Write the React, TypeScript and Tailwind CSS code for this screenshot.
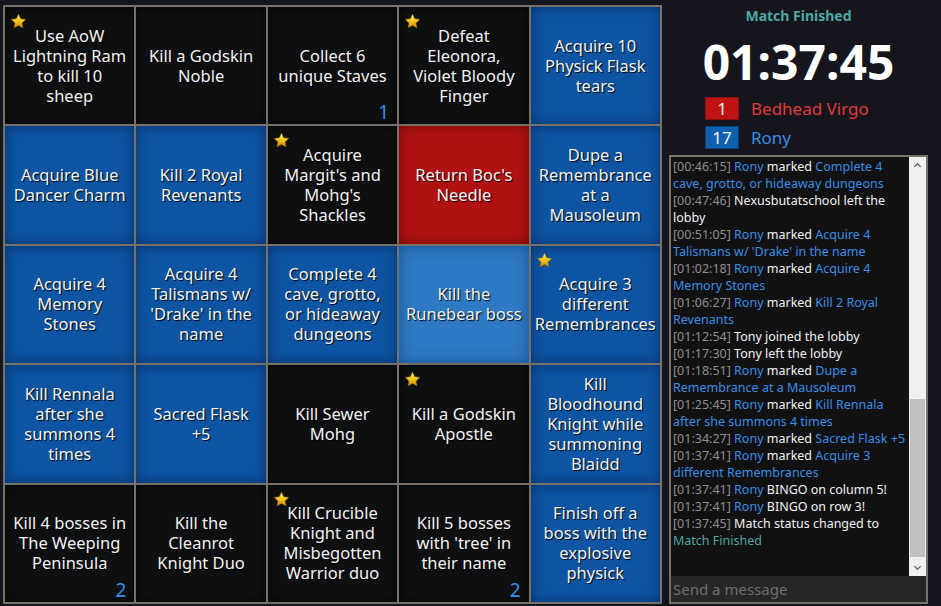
import clsx from "clsx";

type Cell = { text: string; color: "black" | "blue" | "light" | "red"; star?: boolean; count?: number };

const cells: Cell[] = [
  { text: "Use AoW Lightning Ram to kill 10\nsheep", color: "black", star: true },
  { text: "Kill a Godskin Noble", color: "black" },
  { text: "Collect 6 unique Staves", color: "black", count: 1 },
  { text: "Defeat Eleonora, Violet Bloody Finger", color: "black", star: true },
  { text: "Acquire 10 Physick Flask tears", color: "blue" },
  { text: "Acquire Blue Dancer Charm", color: "blue" },
  { text: "Kill 2 Royal Revenants", color: "blue" },
  { text: "Acquire Margit's and Mohg's Shackles", color: "black", star: true },
  { text: "Return Boc's Needle", color: "red" },
  { text: "Dupe a Remembrance at a Mausoleum", color: "blue" },
  { text: "Acquire 4 Memory Stones", color: "blue" },
  { text: "Acquire 4 Talismans w/ 'Drake' in the name", color: "blue" },
  { text: "Complete 4 cave, grotto, or hideaway dungeons", color: "blue" },
  { text: "Kill the Runebear boss", color: "light" },
  { text: "Acquire 3 different Remembrances", color: "blue", star: true },
  { text: "Kill Rennala after she summons 4 times", color: "blue" },
  { text: "Sacred Flask +5", color: "blue" },
  { text: "Kill Sewer Mohg", color: "black" },
  { text: "Kill a Godskin Apostle", color: "black", star: true },
  { text: "Kill Bloodhound Knight while summoning Blaidd", color: "blue" },
  { text: "Kill 4 bosses in The Weeping Peninsula", color: "black", count: 2 },
  { text: "Kill the Cleanrot Knight Duo", color: "black" },
  { text: "Kill Crucible Knight and Misbegotten Warrior duo", color: "black", star: true },
  { text: "Kill 5 bosses with 'tree' in their name", color: "black", count: 2 },
  { text: "Finish off a boss with the explosive physick", color: "blue" },
];

const bg: Record<Cell["color"], string> = {
  black: "bg-[#0e0f10] shadow-[inset_0_0_10px_rgba(0,0,0,0.6)]",
  blue: "bg-[#0d55a3] shadow-[inset_0_0_14px_rgba(0,20,60,0.55)]",
  light: "bg-[#2d79c3] shadow-[inset_0_0_14px_rgba(0,30,80,0.45)]",
  red: "bg-[#b01212] shadow-[inset_0_0_14px_rgba(60,0,0,0.5)]",
};

function Star() {
  return (
    <svg viewBox="0 0 24 24" className="absolute left-[5px] top-[6px] h-[17px] w-[17px]">
      <defs>
        <linearGradient id="sg" x1="0" y1="0" x2="0" y2="1">
          <stop offset="0" stopColor="#fff3a0" />
          <stop offset="0.5" stopColor="#f5c518" />
          <stop offset="1" stopColor="#c98a00" />
        </linearGradient>
      </defs>
      <path
        d="M12 1.5l3.1 6.6 7.2.9-5.3 5 1.4 7.1L12 17.6l-6.4 3.5 1.4-7.1-5.3-5 7.2-.9z"
        fill="url(#sg)"
        stroke="#8a6200"
        strokeWidth="0.8"
      />
    </svg>
  );
}

type Part = { t: string; c: "time" | "name" | "white" | "item" | "teal" };
const log: Part[][] = [
  [{ t: "[00:46:15] ", c: "time" }, { t: "Rony", c: "name" }, { t: " marked ", c: "white" }, { t: "Complete 4 cave, grotto, or hideaway dungeons", c: "item" }],
  [{ t: "[00:47:46] ", c: "time" }, { t: "Nexusbutatschool left the lobby", c: "white" }],
  [{ t: "[00:51:05] ", c: "time" }, { t: "Rony", c: "name" }, { t: " marked ", c: "white" }, { t: "Acquire 4 Talismans w/ 'Drake' in the name", c: "item" }],
  [{ t: "[01:02:18] ", c: "time" }, { t: "Rony", c: "name" }, { t: " marked ", c: "white" }, { t: "Acquire 4 Memory Stones", c: "item" }],
  [{ t: "[01:06:27] ", c: "time" }, { t: "Rony", c: "name" }, { t: " marked ", c: "white" }, { t: "Kill 2 Royal Revenants", c: "item" }],
  [{ t: "[01:12:54] ", c: "time" }, { t: "Tony joined the lobby", c: "white" }],
  [{ t: "[01:17:30] ", c: "time" }, { t: "Tony left the lobby", c: "white" }],
  [{ t: "[01:18:51] ", c: "time" }, { t: "Rony", c: "name" }, { t: " marked ", c: "white" }, { t: "Dupe a Remembrance at a Mausoleum", c: "item" }],
  [{ t: "[01:25:45] ", c: "time" }, { t: "Rony", c: "name" }, { t: " marked ", c: "white" }, { t: "Kill Rennala after she summons 4 times", c: "item" }],
  [{ t: "[01:34:27] ", c: "time" }, { t: "Rony", c: "name" }, { t: " marked ", c: "white" }, { t: "Sacred Flask +5", c: "item" }],
  [{ t: "[01:37:41] ", c: "time" }, { t: "Rony", c: "name" }, { t: " marked ", c: "white" }, { t: "Acquire 3 different Remembrances", c: "item" }],
  [{ t: "[01:37:41] ", c: "time" }, { t: "Rony", c: "name" }, { t: " BINGO on column 5!", c: "white" }],
  [{ t: "[01:37:41] ", c: "time" }, { t: "Rony", c: "name" }, { t: " BINGO on row 3!", c: "white" }],
  [{ t: "[01:37:45] ", c: "time" }, { t: "Match status changed to ", c: "white" }, { t: "Match Finished", c: "teal" }],
];

const partColor: Record<Part["c"], string> = {
  time: "text-[#8f8f8f]",
  name: "text-[#3a8ee6]",
  white: "text-[#f2f2f2]",
  item: "text-[#3a8ee6]",
  teal: "text-[#4ea7a2]",
};

export default function App() {
  return (
    <div className="flex h-[606px] w-[941px] overflow-hidden bg-[#15151d] font-['Noto_Sans',sans-serif]">
      <div className="ml-[3px] mt-[5px] grid h-[599px] w-[659px] grid-cols-5 grid-rows-5 gap-[2px] bg-[#77716a] p-[2px]">
        {cells.map((cell, i) => (
          <div
            key={i}
            className={clsx(
              "relative flex items-center justify-center px-[6px] text-center text-[16.5px] leading-[20px] text-[#f3f3f3] [text-shadow:1px_1px_1px_#000]",
              bg[cell.color],
            )}
          >
            {cell.star && <Star />}
            <span className="whitespace-pre-line">{cell.text}</span>
            {cell.count !== undefined && (
              <span className="absolute bottom-[1px] right-[8px] text-[19px] leading-[22px] text-[#3a8ee6] [text-shadow:none]">
                {cell.count}
              </span>
            )}
          </div>
        ))}
      </div>

      <div className="ml-[7px] flex w-[259px] flex-col">
        <div className="mt-[6px] text-center text-[14px] font-bold leading-[20px] text-[#4ea7a2]">Match Finished</div>
        <div className="mt-[8px] text-center text-[48px] font-bold leading-[56px] text-white">01:37:45</div>
        <div className="mt-[6px] flex flex-col gap-[3px] pl-[36px]">
          <div className="flex items-center gap-[12px]">
            <span className="flex h-[23px] w-[34px] items-center justify-center border border-[#8a1010] bg-[#c01212] text-[17px] text-[#f3f3f3]">
              1
            </span>
            <span className="text-[17px] text-[#e03b3b]">Bedhead Virgo</span>
          </div>
          <div className="flex items-center gap-[12px]">
            <span className="flex h-[23px] w-[34px] items-center justify-center border border-[#0a3e7a] bg-[#1060b0] text-[17px] text-[#f3f3f3]">
              17
            </span>
            <span className="text-[17px] text-[#3a8ee6]">Rony</span>
          </div>
        </div>

        <div className="mt-[5px] flex h-[449px] flex-col border-2 border-[#77716a] bg-[#111111]">
          <div className="flex min-h-0 flex-1">
            <div className="flex-1 overflow-hidden pl-[2px] pt-[1px] text-[12.5px] leading-[17px]">
              {log.map((line, i) => (
                <div key={i}>
                  {line.map((p, j) => (
                    <span key={j} className={partColor[p.c]}>
                      {p.t}
                    </span>
                  ))}
                </div>
              ))}
            </div>
            <div className="flex w-[17px] flex-col bg-[#f0f0f0]">
              <div className="flex h-[17px] items-center justify-center text-[#606060]">
                <svg viewBox="0 0 10 10" className="h-[9px] w-[9px]">
                  <path d="M1.5 6.5L5 3l3.5 3.5" fill="none" stroke="currentColor" strokeWidth="1.4" />
                </svg>
              </div>
              <div className="flex-1" />
              <div className="mx-[1px] h-[158px] bg-[#c1c1c1]" />
              <div className="h-[2px]" />
              <div className="flex h-[17px] items-center justify-center text-[#606060]">
                <svg viewBox="0 0 10 10" className="h-[9px] w-[9px]">
                  <path d="M1.5 3.5L5 7l3.5-3.5" fill="none" stroke="currentColor" strokeWidth="1.4" />
                </svg>
              </div>
            </div>
          </div>
          <input
            placeholder="Send a message"
            className="h-[26px] w-full bg-[#262626] px-[2px] text-[15px] text-white outline-none placeholder:text-[#6f6f6f]"
          />
        </div>
      </div>
    </div>
  );
}
